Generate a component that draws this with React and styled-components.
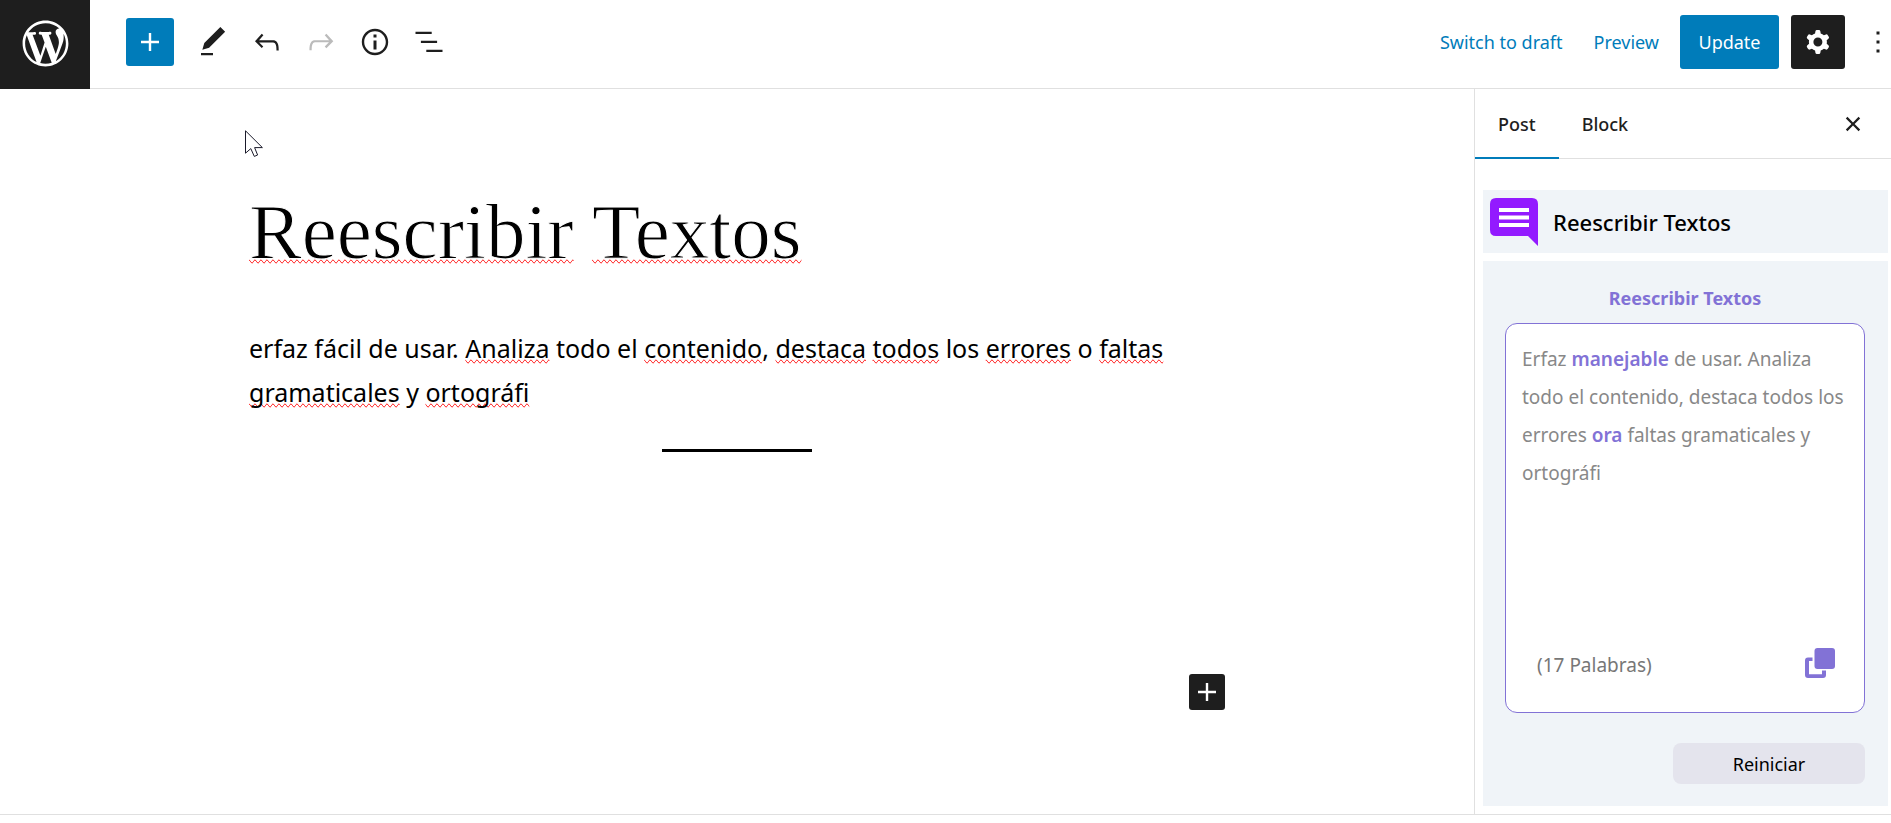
import React from "react";
import styled, { createGlobalStyle } from "styled-components";

const sans = `"Noto Sans", "Open Sans", sans-serif`;
const accent = "#007cba";
const violet = "#8272d6";
const ink = "#1e1e1e";
const line = "#e0e0e0";

const Global = createGlobalStyle`
  *, *::before, *::after { box-sizing: border-box; }
  body { margin: 0; background: #fff; color: ${ink}; font-family: ${sans}; overflow-x: hidden; }
  button { font: inherit; color: inherit; border: 0; padding: 0; background: none; cursor: pointer; }
  svg { display: block; flex: none; }
`;

const Page = styled.div`
  min-height: 100vh;
  display: flex;
  flex-direction: column;
`;

const Header = styled.header`
  display: flex;
  align-items: stretch;
  height: 89px;
`;

const HomeLink = styled.a`
  width: 90px;
  display: flex;
  align-items: center;
  justify-content: center;
  background: ${ink};
  color: #fff;
  padding-bottom: 3px;
`;

const Toolbar = styled.div`
  flex: 1;
  display: flex;
  align-items: center;
  justify-content: space-between;
  padding: 0 0 4px 36px;
  border-bottom: 1px solid ${line};
`;

const Tools = styled.div`
  display: flex;
  align-items: center;
`;

const InserterButton = styled.button`
  width: 48px;
  height: 48px;
  margin-right: 12px;
  display: flex;
  align-items: center;
  justify-content: center;
  border-radius: 3px;
  background: ${accent};
  color: #fff;
`;

const ToolButton = styled.button`
  width: 54px;
  height: 54px;
  display: flex;
  align-items: center;
  justify-content: center;
  &:disabled { color: #bbb; cursor: default; }
`;

const Actions = styled.div`
  display: flex;
  align-items: center;
`;

const LinkButton = styled.button`
  margin-right: ${(p) => p.$after}px;
  color: ${accent};
  font-size: 18px;
  line-height: 54px;
`;

const UpdateButton = styled.button`
  width: 99px;
  height: 54px;
  margin-right: 12px;
  border-radius: 3px;
  background: ${accent};
  color: #fff;
  font-size: 18px;
`;

const SettingsButton = styled.button`
  width: 54px;
  height: 54px;
  margin-right: 20px;
  display: flex;
  align-items: center;
  justify-content: center;
  border-radius: 3px;
  background: ${ink};
  color: #fff;
`;

const MoreButton = styled.button`
  width: 26px;
  height: 54px;
  display: flex;
  align-items: center;
  justify-content: center;
`;

const Body = styled.div`
  flex: 1;
  display: flex;
  border-bottom: 1px solid ${line};
  margin-bottom: 8px;
`;

const Canvas = styled.main`
  position: relative;
  flex: 1;
  padding: 92px 48px 0;
`;

const Column = styled.div`
  max-width: 976px;
  margin: 0 auto;
  color: #000;
`;

const Title = styled.h1`
  margin: 0 0 43px;
  font-family: "Liberation Serif", serif;
  font-weight: 400;
  font-size: 79px;
  line-height: 102px;
  -webkit-text-stroke: 1px #fff;
`;

const Paragraph = styled.p`
  margin: 0;
  font-size: 25px;
  line-height: 44px;
`;

const Misspelt = styled.span`
  text-decoration-line: spelling-error;
`;

const Separator = styled.hr`
  width: 150px;
  height: 3px;
  margin: 35px auto 222px;
  border: 0;
  background: #000;
`;

const AppendButton = styled.button`
  width: 36px;
  height: 36px;
  margin-left: auto;
  display: flex;
  align-items: center;
  justify-content: center;
  border-radius: 3px;
  background: ${ink};
  color: #fff;
`;

const Pointer = styled.svg`
  position: absolute;
  left: 245px;
  top: 41px;
`;

const Sidebar = styled.aside`
  width: 417px;
  display: flex;
  flex-direction: column;
  border-left: 1px solid ${line};
`;

const Tabs = styled.div`
  display: flex;
  height: 70px;
  border-bottom: 1px solid ${line};
`;

const Tab = styled.button`
  height: 70px;
  padding: 0 23px;
  font-size: 18px;
  font-weight: 500;
  box-shadow: ${(p) => (p.$active ? `inset 0 -2px 0 ${accent}` : "none")};
`;

const CloseButton = styled.button`
  width: 36px;
  margin: 0 20px 0 auto;
`;

const Panels = styled.div`
  flex: 1;
  display: flex;
  flex-direction: column;
  gap: 8px;
  padding: 31px 3px 8px 8px;
`;

const PanelHeader = styled.div`
  display: flex;
  align-items: center;
  gap: 15px;
  height: 63px;
  padding: 0 7px;
  background: #f0f4f8;
`;

const PanelName = styled.h2`
  margin: 0;
  font-size: 22px;
  line-height: 32px;
  font-weight: 500;
  color: #000;
`;

const Panel = styled.section`
  flex: 1;
  display: flex;
  flex-direction: column;
  padding: 22px 23px 22px 22px;
  background: #f0f4f8;
`;

const PanelTitle = styled.h3`
  margin: 0 0 10px;
  text-align: center;
  font-size: 18px;
  line-height: 30px;
  font-weight: 700;
  color: ${violet};
`;

const Result = styled.div`
  min-height: 390px;
  display: flex;
  flex-direction: column;
  justify-content: space-between;
  border: 1px solid ${violet};
  border-radius: 12px;
  background: #fff;
  color: #888;
`;

const ResultText = styled.p`
  margin: 0;
  padding: 16px 10px 0 16px;
  font-size: 19px;
  line-height: 38px;
`;

const Changed = styled.b`
  font-weight: 600;
  color: ${violet};
`;

const ResultFooter = styled.div`
  display: flex;
  align-items: center;
  justify-content: space-between;
  padding: 0 29px 31px 31px;
  color: #777;
  font-size: 19px;
  line-height: 32px;
`;

const WordCount = styled.span`
  padding-top: 4px;
`;

const ResetButton = styled.button`
  width: 192px;
  height: 41px;
  margin: 30px 0 0 auto;
  border-radius: 8px;
  background: #e4e4ed;
  color: #000;
  font-size: 18px;
`;

const Icon = ({ d, size = 36, box = "0 0 24 24", ...rest }) => (
  <svg width={size} height={size} viewBox={box} fill="currentColor" aria-hidden="true" {...rest}>
    <path d={d} fillRule="evenodd" />
  </svg>
);

const paths = {
  wordpress:
    "M20 10c0-5.51-4.49-10-10-10C4.48 0 0 4.49 0 10c0 5.52 4.48 10 10 10 5.51 0 10-4.48 10-10zM7.78 15.37L4.37 6.22c.55-.02 1.17-.08 1.17-.08.5-.06.44-1.13-.06-1.11 0 0-1.45.11-2.37.11-.18 0-.37 0-.58-.01C4.12 2.69 6.87 1.11 10 1.11c2.33 0 4.45.87 6.05 2.34-.68-.11-1.65.39-1.65 1.58 0 .74.45 1.36.9 2.1.35.61.55 1.36.55 2.46 0 1.49-1.4 5-1.4 5l-3.03-8.37c.54-.02.82-.17.82-.17.5-.05.44-1.25-.06-1.22 0 0-1.44.12-2.38.12-.87 0-2.33-.12-2.33-.12-.5-.03-.56 1.2-.06 1.22l.92.08 1.26 3.41zM17.41 10c.24-.64.74-1.87.43-4.25.7 1.29 1.05 2.71 1.05 4.25 0 3.29-1.73 6.24-4.4 7.78.97-2.59 1.94-5.2 2.92-7.78zM6.1 18.09C3.12 16.65 1.11 13.53 1.11 10c0-1.3.23-2.48.72-3.59C3.25 10.3 4.67 14.2 6.1 18.09zm4.03-6.63l2.58 6.98c-.86.29-1.76.45-2.71.45-.79 0-1.57-.11-2.29-.33.81-2.38 1.62-4.74 2.42-7.1z",
  plus: "M18 11.2h-5.2V6h-1.6v5.2H6v1.6h5.2V18h1.6v-5.2H18z",
  edit: "M20.1 5.1L16.9 2 6.2 12.7l-1.3 4.4 4.5-1.3L20.1 5.1zM4 20.8h8v-1.5H4v1.5z",
  undo: "M18.3 11.7c-.6-.6-1.4-.9-2.3-.9H6.7l2.9-3.3-1.1-1-4.5 5L8.5 16l1-1-2.7-2.7H16c.5 0 .9.2 1.3.5 1 1 1 3.4 1 4.5v.3h1.5v-.2c0-1.5 0-4.3-1.5-5.7z",
  redo: "M15.6 6.5l-1.1 1 2.9 3.3H8c-.9 0-1.7.3-2.3.9-1.4 1.5-1.4 4.2-1.4 5.6v.2h1.5v-.3c0-1.1 0-3.5 1-4.5.3-.3.7-.5 1.3-.5h9.2L14.5 15l1.1 1.1 4.6-4.6-4.6-5z",
  info: "M12 3.2c-4.8 0-8.8 3.9-8.8 8.8 0 4.8 3.9 8.8 8.8 8.8 4.8 0 8.8-3.9 8.8-8.8 0-4.8-4-8.8-8.8-8.8zm0 16c-4 0-7.2-3.3-7.2-7.2C4.8 8 8 4.8 12 4.8s7.2 3.3 7.2 7.2c0 4-3.2 7.2-7.2 7.2zM11 17h2v-6h-2v6zm0-8h2V7h-2v2z",
  list: "M13.8 5.2H3v1.5h10.8V5.2zm-3.6 12v1.5H21v-1.5H10.2zm7.2-6H6.6v1.5h10.8v-1.5z",
  cog: "M10.289 4.836A1 1 0 0111.275 4h1.306a1 1 0 01.987.836l.244 1.466c.787.26 1.503.679 2.108 1.218l1.393-.522a1 1 0 011.216.437l.653 1.13a1 1 0 01-.23 1.273l-1.148.944a6.025 6.025 0 010 2.435l1.149.946a1 1 0 01.23 1.272l-.653 1.13a1 1 0 01-1.216.437l-1.394-.522c-.605.54-1.32.958-2.108 1.218l-.244 1.466a1 1 0 01-.987.836h-1.306a1 1 0 01-.986-.836l-.244-1.466a5.995 5.995 0 01-2.108-1.218l-1.394.522a1 1 0 01-1.217-.436l-.653-1.131a1 1 0 01.23-1.272l1.149-.946a6.026 6.026 0 010-2.435l-1.148-.944a1 1 0 01-.23-1.272l.653-1.131a1 1 0 011.217-.437l1.393.522a5.994 5.994 0 012.108-1.218l.244-1.466zM14.929 12a3 3 0 11-6 0 3 3 0 016 0z",
  more: "M13 19h-2v-2h2v2zm0-6h-2v-2h2v2zm0-6h-2V5h2v2z",
  close:
    "M12 13.06l3.712 3.713 1.061-1.06L13.061 12l3.712-3.712-1.06-1.06L12 10.938 8.288 7.227l-1.061 1.06L10.939 12l-3.712 3.712 1.06 1.061L12 13.061z",
};

export default function App() {
  return (
    <Page>
      <Global />
      <Header>
        <HomeLink href="#" aria-label="WordPress">
          <Icon d={paths.wordpress} size={55} box="-2 -2 24 24" />
        </HomeLink>
        <Toolbar>
          <Tools>
            <InserterButton aria-label="Add block"><Icon d={paths.plus} /></InserterButton>
            <ToolButton aria-label="Tools"><Icon d={paths.edit} /></ToolButton>
            <ToolButton aria-label="Undo"><Icon d={paths.undo} /></ToolButton>
            <ToolButton aria-label="Redo" disabled><Icon d={paths.redo} /></ToolButton>
            <ToolButton aria-label="Details"><Icon d={paths.info} /></ToolButton>
            <ToolButton aria-label="List view"><Icon d={paths.list} /></ToolButton>
          </Tools>
          <Actions>
            <LinkButton $after={31}>Switch to draft</LinkButton>
            <LinkButton $after={21}>Preview</LinkButton>
            <UpdateButton>Update</UpdateButton>
            <SettingsButton aria-label="Settings"><Icon d={paths.cog} /></SettingsButton>
            <MoreButton aria-label="Options">
              <Icon d={paths.more} size={24} box="4 4 16 16" />
            </MoreButton>
          </Actions>
        </Toolbar>
      </Header>

      <Body>
        <Canvas>
          <Pointer width="20" height="28" viewBox="0 0 20 28" aria-hidden="true">
            <path
              d="M.5 .8V23.2L5.8 18.6L9.3 26.4L12.6 25L9.6 17.6H17.4Z"
              fill="#fff"
              stroke="#1a1a2a"
            />
          </Pointer>
          <Column>
            <Title>
              <Misspelt>Reescribir</Misspelt> <Misspelt>Textos</Misspelt>
            </Title>
            <Paragraph>
              erfaz fácil de usar. <Misspelt>Analiza</Misspelt> todo el <Misspelt>contenido</Misspelt>,{" "}
              <Misspelt>destaca</Misspelt> <Misspelt>todos</Misspelt> los <Misspelt>errores</Misspelt> o{" "}
              <Misspelt>faltas</Misspelt> <Misspelt>gramaticales</Misspelt> y <Misspelt>ortográfi</Misspelt>
            </Paragraph>
            <Separator />
            <AppendButton aria-label="Add block"><Icon d={paths.plus} /></AppendButton>
          </Column>
        </Canvas>

        <Sidebar>
          <Tabs>
            <Tab $active>Post</Tab>
            <Tab>Block</Tab>
            <CloseButton aria-label="Close settings"><Icon d={paths.close} /></CloseButton>
          </Tabs>
          <Panels>
            <PanelHeader>
              <svg width="48" height="48" viewBox="0 0 48 48" aria-hidden="true">
                <path d="M6 0H42Q48 0 48 6V48L38 38H6Q0 38 0 32V6Q0 0 6 0Z" fill="#931aff" />
                <path d="M9 12H39M9 19.500H39M9 27H39" stroke="#fff" strokeWidth="4" />
              </svg>
              <PanelName>Reescribir Textos</PanelName>
            </PanelHeader>
            <Panel>
              <PanelTitle>Reescribir Textos</PanelTitle>
              <Result>
                <ResultText>
                  Erfaz <Changed>manejable</Changed> de usar. Analiza todo el contenido, destaca todos los
                  errores <Changed>ora</Changed> faltas gramaticales y ortográfi
                </ResultText>
                <ResultFooter>
                  <WordCount>(17 Palabras)</WordCount>
                  <button aria-label="Copiar">
                    <svg width="30" height="30" viewBox="0 0 30 30" fill={violet} aria-hidden="true">
                      <rect x="9.500" width="20.500" height="21" rx="3" />
                      <path d="M7.500 9.500H3Q0 9.500 0 12.500V27Q0 30 3 30H18Q21 30 21 27V22.500H17V26.200H4V13H7.500Z" />
                    </svg>
                  </button>
                </ResultFooter>
              </Result>
              <ResetButton>Reiniciar</ResetButton>
            </Panel>
          </Panels>
        </Sidebar>
      </Body>
    </Page>
  );
}
